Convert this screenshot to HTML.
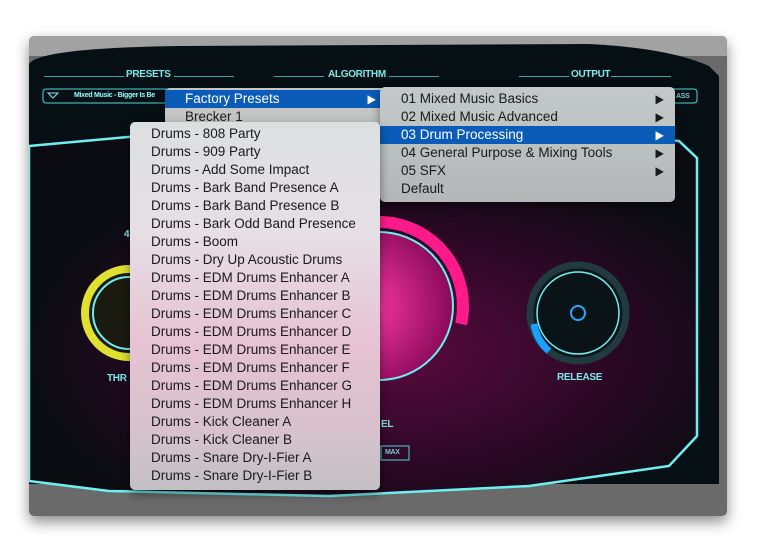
<!DOCTYPE html>
<html><head><style>
body{margin:0;width:757px;height:552px;background:#fff;position:relative;overflow:hidden;font-family:"Liberation Sans",sans-serif}
.win{position:absolute;left:29px;top:36px;width:698px;height:480px;background:#6a6a6a;border-radius:5px;box-shadow:0 6px 14px rgba(0,0,0,.45);overflow:hidden}
.wtop{position:absolute;left:0;top:0;width:698px;height:20px;background:#a2a2a2}
.lbl{position:absolute;color:#7ee8e8;font-size:10px;font-weight:bold;letter-spacing:-.3px}
.line{position:absolute;height:1px;background:#3fa3a3}
.menu{position:absolute;border-radius:5px;box-shadow:0 4px 10px rgba(0,0,0,.45);font-size:13.5px;color:#1a1a1a}
.it{position:absolute;left:0;right:0;height:18px;line-height:18px}
.hl{background:#0a5cb8;color:#fff}
.ar{position:absolute;right:11px;font-size:12px;transform:scaleX(.9)}
</style></head><body>
<div class="win">
<div class="wtop"></div>
<svg width="698" height="480" style="position:absolute;left:0;top:0">
<defs>
<radialGradient id="g1" cx="0.55" cy="0.6" r="0.55"><stop offset="0" stop-color="#5a0a40"/><stop offset="0.6" stop-color="#2a0824"/><stop offset="1" stop-color="#0b0c12"/></radialGradient>
<radialGradient id="pk" cx="0.4" cy="0.5" r="0.6"><stop offset="0" stop-color="#ff3aa8"/><stop offset="1" stop-color="#8a0a5a"/></radialGradient>
</defs>
<path d="M0 28 Q10 12 150 10 L560 8 Q640 12 680 30 L690 40 L690 448 L0 448 Z" fill="#061014"/>
<path d="M0 110 L110 100 L560 98 L650 105 L668 122 L668 400 L640 430 L500 450 L300 460 L80 455 L0 445 Z" fill="url(#g1)" stroke="#6ff0f0" stroke-width="2.5"/>
<circle cx="100" cy="277" r="44" fill="#1a1a10" stroke="#e0e030" stroke-width="8"/>
<circle cx="100" cy="277" r="36" fill="none" stroke="#6ff0f0" stroke-width="2"/>
<circle cx="350" cy="270" r="84" fill="none" stroke="#ff1a8c" stroke-width="12" stroke-dasharray="150 400" transform="rotate(-90 350 270)"/>
<circle cx="350" cy="270" r="74" fill="url(#pk)" stroke="#6ff0f0" stroke-width="2"/>
<circle cx="549" cy="277" r="48" fill="#0a1418" stroke="#213a40" stroke-width="7"/>
<path d="M505 288 A46 46 0 0 0 520 315" stroke="#1aa0ff" stroke-width="7" fill="none"/>
<circle cx="549" cy="277" r="41" fill="none" stroke="#6ff0f0" stroke-width="1.5"/>
<circle cx="549" cy="277" r="7" fill="none" stroke="#2aa8ff" stroke-width="2"/>
<rect x="14" y="53" width="134" height="14" fill="none" stroke="#4ad8d8" rx="3"/>
<path d="M19 57 L29 57 L24 62 Z" fill="none" stroke="#7ee8e8"/>
<rect x="640" y="53" width="28" height="14" fill="none" stroke="#4ad8d8" rx="3"/>
<rect x="352" y="410" width="28" height="14" fill="none" stroke="#4ad8d8"/>
</svg>
<div class="line" style="left:15px;top:40px;width:80px"></div><div class="lbl" style="left:97px;top:33px">PRESETS</div><div class="line" style="left:145px;top:40px;width:60px"></div>
<div class="line" style="left:245px;top:40px;width:50px"></div><div class="lbl" style="left:299px;top:33px">ALGORITHM</div><div class="line" style="left:360px;top:40px;width:50px"></div>
<div class="line" style="left:490px;top:40px;width:50px"></div><div class="lbl" style="left:542px;top:33px">OUTPUT</div><div class="line" style="left:582px;top:40px;width:60px"></div>
<div class="lbl" style="left:45px;top:56px;font-size:7px;color:#9ff">Mixed Music - Bigger Is Be</div>
<div class="lbl" style="left:647px;top:57px;font-size:7px;color:#7cc">ASS</div>
<div class="lbl" style="left:78px;top:337px">THR</div>
<div class="lbl" style="left:95px;top:193px">4</div>
<div class="lbl" style="left:528px;top:336px">RELEASE</div>
<div class="lbl" style="left:352px;top:383px">EL</div>
<div class="lbl" style="left:356px;top:413px;font-size:7px;color:#7cc">MAX</div>
</div>

<div class="menu" style="left:165px;top:88px;width:222px;height:40px;background:#c4c6c6">
<div class="it hl" style="top:2px;padding-left:20px;box-sizing:border-box">Factory Presets<span class="ar">▶</span></div>
<div class="it" style="top:20px;padding-left:20px;box-sizing:border-box">Brecker 1</div>
</div>
<div class="menu" style="left:380px;top:87px;width:295px;height:115px;background:linear-gradient(#c3c9c9,#b4b7b8)">
<div class="it" style="top:3px;padding-left:21px;box-sizing:border-box">01 Mixed Music Basics<span class="ar">▶</span></div>
<div class="it" style="top:21px;padding-left:21px;box-sizing:border-box">02 Mixed Music Advanced<span class="ar">▶</span></div>
<div class="it hl" style="top:39px;padding-left:21px;box-sizing:border-box">03 Drum Processing<span class="ar">▶</span></div>
<div class="it" style="top:57px;padding-left:21px;box-sizing:border-box">04 General Purpose &amp; Mixing Tools<span class="ar">▶</span></div>
<div class="it" style="top:75px;padding-left:21px;box-sizing:border-box">05 SFX<span class="ar">▶</span></div>
<div class="it" style="top:93px;padding-left:21px;box-sizing:border-box">Default</div>
</div>
<div class="menu" style="left:130px;top:122px;width:250px;height:368px;background:linear-gradient(#dcdfe0 0%,#e6dfe6 30%,#e6c2d2 60%,#d6c2cc 85%,#c2c0c4 100%)">
<div style="position:absolute;left:21px;top:3px;line-height:18px">
Drums - 808 Party<br>Drums - 909 Party<br>Drums - Add Some Impact<br>Drums - Bark Band Presence A<br>Drums - Bark Band Presence B<br>Drums - Bark Odd Band Presence<br>Drums - Boom<br>Drums - Dry Up Acoustic Drums<br>Drums - EDM Drums Enhancer A<br>Drums - EDM Drums Enhancer B<br>Drums - EDM Drums Enhancer C<br>Drums - EDM Drums Enhancer D<br>Drums - EDM Drums Enhancer E<br>Drums - EDM Drums Enhancer F<br>Drums - EDM Drums Enhancer G<br>Drums - EDM Drums Enhancer H<br>Drums - Kick Cleaner A<br>Drums - Kick Cleaner B<br>Drums - Snare Dry-I-Fier A<br>Drums - Snare Dry-I-Fier B
</div></div>
</body></html>
